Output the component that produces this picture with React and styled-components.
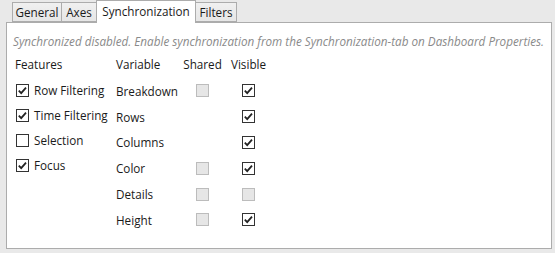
import React from 'react';
import styled, { createGlobalStyle } from 'styled-components';

const GlobalStyle = createGlobalStyle`
  html, body {
    margin: 0;
    padding: 0;
    background: #e9e9e9;
  }
  body {
    font-family: "Open Sans", "Noto Sans", sans-serif;
    font-size: 11.7px;
    color: #1a1a1a;
  }
`;

const Window = styled.div`
  width: 555px;
  height: 253px;
  box-sizing: border-box;
  padding: 0 3px 4px 6px;
  display: flex;
  flex-direction: column;
`;

const TabStrip = styled.div`
  display: flex;
  align-items: flex-end;
  height: 22px;
  padding-left: 6px;
  position: relative;
  z-index: 1;
`;

const Tab = styled.div`
  box-sizing: border-box;
  width: ${p => p.width}px;
  height: ${p => (p.active ? '23px' : '20px')};
  margin-bottom: ${p => (p.active ? '-1px' : '0')};
  margin-left: -1px;
  display: flex;
  align-items: center;
  justify-content: center;
  padding-bottom: ${p => (p.active ? '2px' : '0')};
  border: 1px solid #acacac;
  border-bottom: ${p => (p.active ? 'none' : '1px solid #acacac')};
  background: ${p => (p.active ? '#ffffff' : 'linear-gradient(#f0f0f0, #e6e6e6)')};
  white-space: nowrap;
  &:first-child {
    margin-left: 0;
  }
`;

const Panel = styled.div`
  flex: 1;
  background: #ffffff;
  border: 1px solid #acacac;
  padding-top: 10px;
`;

const Note = styled.div`
  font-style: italic;
  color: #8a8a8a;
  white-space: nowrap;
  height: 16px;
  line-height: 16px;
  padding-left: 6px;
`;

const Columns = styled.div`
  display: flex;
  margin-top: 3px;
  padding-left: 8px;
`;

const FeatureList = styled.div`
  width: 101px;
  display: flex;
  flex-direction: column;
`;

const Header = styled.div`
  height: 24px;
  line-height: 24px;
  margin-bottom: 1.5px;
`;

const FeatureRow = styled.label`
  height: 25px;
  display: flex;
  align-items: center;
  gap: 5px;
  padding-left: 1px;
`;

const VariableGrid = styled.div`
  display: grid;
  grid-template-columns: 69px 35px 57px;
  grid-template-rows: 26px;
  grid-auto-rows: 25.8px;
`;

const Cell = styled.div`
  display: flex;
  align-items: ${p => (p.head ? 'flex-start' : 'center')};
  line-height: ${p => (p.head ? '24px' : 'normal')};
  justify-content: ${p => (p.center ? 'center' : 'flex-start')};
  white-space: nowrap;
`;

const Box = styled.span`
  box-sizing: border-box;
  width: 13px;
  height: 13px;
  flex: none;
  display: inline-flex;
  align-items: center;
  justify-content: center;
  border: 1px solid ${p => (p.disabled ? '#bcbcbc' : '#333333')};
  background: ${p => (p.disabled ? '#e6e6e6' : '#ffffff')};
`;

const CheckBox = ({ checked, disabled }) => (
  <Box disabled={disabled}>
    {checked && (
      <svg width="11" height="11" viewBox="0 0 11 11">
        <path d="M1.8 5.6 L4.2 8.1 L9 2.6" fill="none" stroke="#222" strokeWidth="1.8" />
      </svg>
    )}
  </Box>
);

const features = [
  { name: 'Row Filtering', checked: true },
  { name: 'Time Filtering', checked: true },
  { name: 'Selection', checked: false },
  { name: 'Focus', checked: true },
];

const variables = [
  { name: 'Breakdown', shared: true, visible: true, visibleEnabled: true },
  { name: 'Rows', shared: false, visible: true, visibleEnabled: true },
  { name: 'Columns', shared: false, visible: true, visibleEnabled: true },
  { name: 'Color', shared: true, visible: true, visibleEnabled: true },
  { name: 'Details', shared: true, visible: false, visibleEnabled: false },
  { name: 'Height', shared: true, visible: true, visibleEnabled: true },
];

const tabs = [
  { name: 'General', width: 50 },
  { name: 'Axes', width: 36 },
  { name: 'Synchronization', width: 100, active: true },
  { name: 'Filters', width: 42 },
];

export default function App() {
  return (
    <Window>
      <GlobalStyle />
      <TabStrip>
        {tabs.map(t => (
          <Tab key={t.name} width={t.width} active={t.active}>{t.name}</Tab>
        ))}
      </TabStrip>
      <Panel>
        <Note>Synchronized disabled. Enable synchronization from the Synchronization-tab on Dashboard Properties.</Note>
        <Columns>
          <FeatureList>
            <Header>Features</Header>
            {features.map(f => (
              <FeatureRow key={f.name}>
                <CheckBox checked={f.checked} />
                {f.name}
              </FeatureRow>
            ))}
          </FeatureList>
          <VariableGrid>
            <Cell head>Variable</Cell>
            <Cell head center>Shared</Cell>
            <Cell head center>Visible</Cell>
            {variables.map(v => (
              <React.Fragment key={v.name}>
                <Cell>{v.name}</Cell>
                <Cell center>{v.shared && <CheckBox disabled />}</Cell>
                <Cell center>
                  <CheckBox checked={v.visible} disabled={!v.visibleEnabled} />
                </Cell>
              </React.Fragment>
            ))}
          </VariableGrid>
        </Columns>
      </Panel>
    </Window>
  );
}
